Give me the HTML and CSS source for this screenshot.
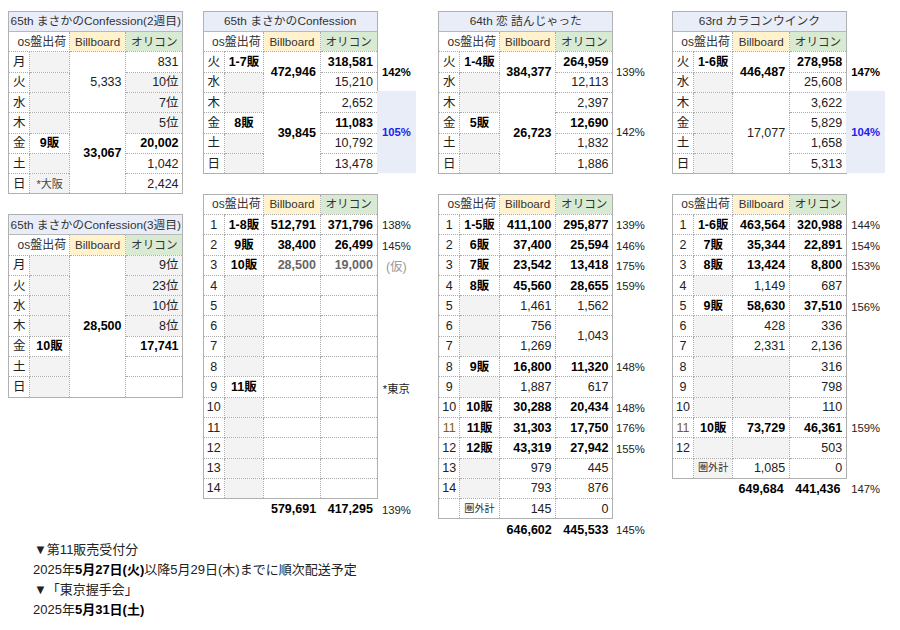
FILE: index.html
```html
<!DOCTYPE html>
<html>
<head>
    <title>Sales sheets</title>
    <link rel="stylesheet" href="styles.css">
</head>
<body>
    <div class="boards">
        <div class="column">
            <div class="sheet sheet-plain">
                <table>
                    <colgroup><col class="c-day"><col class="c-lot"><col class="c-bb"><col class="c-or"></colgroup>
                    <tr class="title"><td colspan="4">65th まさかのConfession(2週目)</td></tr>
                    <tr class="head"><td colspan="2" class="os">os盤出荷</td><td class="bb">Billboard</td><td class="or">オリコン</td></tr>
                    <tr><td class="d">月</td><td class="g"></td><td class="n" rowspan="3">5,333</td><td class="n">831</td></tr>
                    <tr><td class="d">火</td><td class="g"></td><td class="n g">10位</td></tr>
                    <tr><td class="d">水</td><td class="g"></td><td class="n g">7位</td></tr>
                    <tr><td class="d">木</td><td class="g"></td><td class="n b" rowspan="4">33,067</td><td class="n g">5位</td></tr>
                    <tr><td class="d">金</td><td class="l b">9販</td><td class="n b">20,002</td></tr>
                    <tr><td class="d">土</td><td class="g"></td><td class="n">1,042</td></tr>
                    <tr><td class="d">日</td><td class="g small">*大阪</td><td class="n">2,424</td></tr>
                </table>
            </div>
            <div class="sheet sheet-plain">
                <table>
                    <colgroup><col class="c-day"><col class="c-lot"><col class="c-bb"><col class="c-or"></colgroup>
                    <tr class="title"><td colspan="4">65th まさかのConfession(3週目)</td></tr>
                    <tr class="head"><td colspan="2" class="os">os盤出荷</td><td class="bb">Billboard</td><td class="or">オリコン</td></tr>
                    <tr><td class="d">月</td><td class="g"></td><td class="n b" rowspan="7">28,500</td><td class="n g">9位</td></tr>
                    <tr><td class="d">火</td><td class="g"></td><td class="n g">23位</td></tr>
                    <tr><td class="d">水</td><td class="g"></td><td class="n g">10位</td></tr>
                    <tr><td class="d">木</td><td class="g"></td><td class="n g">8位</td></tr>
                    <tr><td class="d">金</td><td class="l b">10販</td><td class="n b">17,741</td></tr>
                    <tr><td class="d">土</td><td class="g"></td><td class="n"></td></tr>
                    <tr><td class="d">日</td><td class="g"></td><td class="n"></td></tr>
                </table>
            </div>
        </div>

        <div class="column">
            <div class="sheet">
                <table>
                    <colgroup><col class="c-day"><col class="c-lot"><col class="c-bb"><col class="c-or"></colgroup>
                    <tr class="title"><td colspan="4">65th まさかのConfession</td></tr>
                    <tr class="head"><td colspan="2" class="os">os盤出荷</td><td class="bb">Billboard</td><td class="or">オリコン</td></tr>
                    <tr><td class="d">火</td><td class="l b">1-7販</td><td class="n b" rowspan="2">472,946</td><td class="n b">318,581</td></tr>
                    <tr><td class="d">水</td><td class="g"></td><td class="n">15,210</td></tr>
                    <tr><td class="d">木</td><td class="g"></td><td class="n b" rowspan="4">39,845</td><td class="n">2,652</td></tr>
                    <tr><td class="d">金</td><td class="l b">8販</td><td class="n b">11,083</td></tr>
                    <tr><td class="d">土</td><td class="g"></td><td class="n">10,792</td></tr>
                    <tr><td class="d">日</td><td class="g"></td><td class="n">13,478</td></tr>
                </table>
                <div class="side side-top">
                    <div class="pct two b">142%</div>
                    <div class="pct four blue">105%</div>
                </div>
            </div>
            <div class="sheet">
                <table>
                    <colgroup><col class="c-day"><col class="c-lot"><col class="c-bb"><col class="c-or"></colgroup>
                    <tr class="head"><td colspan="2" class="os">os盤出荷</td><td class="bb">Billboard</td><td class="or">オリコン</td></tr>
                    <tr><td class="d">1</td><td class="l b">1-8販</td><td class="n b">512,791</td><td class="n b">371,796</td></tr>
                    <tr><td class="d">2</td><td class="l b">9販</td><td class="n b">38,400</td><td class="n b">26,499</td></tr>
                    <tr><td class="d">3</td><td class="l b">10販</td><td class="n b tentative">28,500</td><td class="n b tentative">19,000</td></tr>
                    <tr><td class="d">4</td><td class="g"></td><td></td><td></td></tr>
                    <tr><td class="d">5</td><td class="g"></td><td></td><td></td></tr>
                    <tr><td class="d">6</td><td class="g"></td><td></td><td></td></tr>
                    <tr><td class="d">7</td><td class="g"></td><td></td><td></td></tr>
                    <tr><td class="d">8</td><td class="g"></td><td></td><td></td></tr>
                    <tr><td class="d">9</td><td class="l b">11販</td><td></td><td></td></tr>
                    <tr><td class="d">10</td><td class="g"></td><td></td><td></td></tr>
                    <tr><td class="d">11</td><td class="g"></td><td></td><td></td></tr>
                    <tr><td class="d">12</td><td class="g"></td><td></td><td></td></tr>
                    <tr><td class="d">13</td><td class="g"></td><td></td><td></td></tr>
                    <tr><td class="d">14</td><td class="g"></td><td></td><td></td></tr>
                </table>
                <div class="side side-sub">
                    <div class="pct">138%</div>
                    <div class="pct">145%</div>
                    <div class="pct tentative-note">(仮)</div>
                    <div></div><div></div><div></div><div></div><div></div>
                    <div class="pct">*東京</div>
                </div>
                <div class="totals"><span>579,691</span><span>417,295</span></div>
                <div class="pct">139%</div>
            </div>
        </div>

        <div class="column">
            <div class="sheet tight">
                <table>
                    <colgroup><col class="c-day"><col class="c-lot"><col class="c-bb"><col class="c-or"></colgroup>
                    <tr class="title"><td colspan="4">64th 恋 詰んじゃった</td></tr>
                    <tr class="head"><td colspan="2" class="os">os盤出荷</td><td class="bb">Billboard</td><td class="or">オリコン</td></tr>
                    <tr><td class="d">火</td><td class="l b">1-4販</td><td class="n b" rowspan="2">384,377</td><td class="n b">264,959</td></tr>
                    <tr><td class="d">水</td><td class="g"></td><td class="n">12,113</td></tr>
                    <tr><td class="d">木</td><td class="g"></td><td class="n b" rowspan="4">26,723</td><td class="n">2,397</td></tr>
                    <tr><td class="d">金</td><td class="l b">5販</td><td class="n b">12,690</td></tr>
                    <tr><td class="d">土</td><td class="g"></td><td class="n">1,832</td></tr>
                    <tr><td class="d">日</td><td class="g"></td><td class="n">1,886</td></tr>
                </table>
                <div class="side side-top">
                    <div class="pct two">139%</div>
                    <div class="pct four">142%</div>
                </div>
            </div>
            <div class="sheet tight">
                <table>
                    <colgroup><col class="c-day"><col class="c-lot"><col class="c-bb"><col class="c-or"></colgroup>
                    <tr class="head"><td colspan="2" class="os">os盤出荷</td><td class="bb">Billboard</td><td class="or">オリコン</td></tr>
                    <tr><td class="d">1</td><td class="l b">1-5販</td><td class="n b">411,100</td><td class="n b">295,877</td></tr>
                    <tr><td class="d">2</td><td class="l b">6販</td><td class="n b">37,400</td><td class="n b">25,594</td></tr>
                    <tr><td class="d">3</td><td class="l b">7販</td><td class="n b">23,542</td><td class="n b">13,418</td></tr>
                    <tr><td class="d">4</td><td class="l b">8販</td><td class="n b">45,560</td><td class="n b">28,655</td></tr>
                    <tr><td class="d">5</td><td class="g"></td><td class="n">1,461</td><td class="n">1,562</td></tr>
                    <tr><td class="d">6</td><td class="g"></td><td class="n">756</td><td class="n" rowspan="2">1,043</td></tr>
                    <tr><td class="d">7</td><td class="g"></td><td class="n">1,269</td></tr>
                    <tr><td class="d">8</td><td class="l b">9販</td><td class="n b">16,800</td><td class="n b">11,320</td></tr>
                    <tr><td class="d">9</td><td class="g"></td><td class="n">1,887</td><td class="n">617</td></tr>
                    <tr><td class="d">10</td><td class="l b">10販</td><td class="n b">30,288</td><td class="n b">20,434</td></tr>
                    <tr><td class="d olive">11</td><td class="l b">11販</td><td class="n b">31,303</td><td class="n b">17,750</td></tr>
                    <tr><td class="d">12</td><td class="l b">12販</td><td class="n b">43,319</td><td class="n b">27,942</td></tr>
                    <tr><td class="d">13</td><td class="g"></td><td class="n">979</td><td class="n">445</td></tr>
                    <tr><td class="d">14</td><td class="g"></td><td class="n">793</td><td class="n">876</td></tr>
                    <tr><td class="d"></td><td class="out">圏外計</td><td class="n">145</td><td class="n">0</td></tr>
                </table>
                <div class="side side-sub">
                    <div class="pct">139%</div>
                    <div class="pct">146%</div>
                    <div class="pct">175%</div>
                    <div class="pct">159%</div>
                    <div></div><div></div><div></div>
                    <div class="pct">148%</div>
                    <div></div>
                    <div class="pct">148%</div>
                    <div class="pct">176%</div>
                    <div class="pct">155%</div>
                </div>
                <div class="totals"><span>646,602</span><span>445,533</span></div>
                <div class="pct">145%</div>
            </div>
        </div>

        <div class="column">
            <div class="sheet">
                <table>
                    <colgroup><col class="c-day"><col class="c-lot"><col class="c-bb"><col class="c-or"></colgroup>
                    <tr class="title"><td colspan="4">63rd カラコンウインク</td></tr>
                    <tr class="head"><td colspan="2" class="os">os盤出荷</td><td class="bb">Billboard</td><td class="or">オリコン</td></tr>
                    <tr><td class="d">火</td><td class="l b">1-6販</td><td class="n b" rowspan="2">446,487</td><td class="n b">278,958</td></tr>
                    <tr><td class="d">水</td><td class="g"></td><td class="n">25,608</td></tr>
                    <tr><td class="d">木</td><td class="g"></td><td class="n" rowspan="4">17,077</td><td class="n">3,622</td></tr>
                    <tr><td class="d">金</td><td class="g"></td><td class="n">5,829</td></tr>
                    <tr><td class="d">土</td><td class="g"></td><td class="n">1,658</td></tr>
                    <tr><td class="d">日</td><td class="g"></td><td class="n">5,313</td></tr>
                </table>
                <div class="side side-top">
                    <div class="pct two b">147%</div>
                    <div class="pct four blue">104%</div>
                </div>
            </div>
            <div class="sheet">
                <table>
                    <colgroup><col class="c-day"><col class="c-lot"><col class="c-bb"><col class="c-or"></colgroup>
                    <tr class="head"><td colspan="2" class="os">os盤出荷</td><td class="bb">Billboard</td><td class="or">オリコン</td></tr>
                    <tr><td class="d">1</td><td class="l b">1-6販</td><td class="n b">463,564</td><td class="n b">320,988</td></tr>
                    <tr><td class="d">2</td><td class="l b">7販</td><td class="n b">35,344</td><td class="n b">22,891</td></tr>
                    <tr><td class="d">3</td><td class="l b">8販</td><td class="n b">13,424</td><td class="n b">8,800</td></tr>
                    <tr><td class="d">4</td><td class="g"></td><td class="n">1,149</td><td class="n">687</td></tr>
                    <tr><td class="d">5</td><td class="l b">9販</td><td class="n b">58,630</td><td class="n b">37,510</td></tr>
                    <tr><td class="d">6</td><td class="g"></td><td class="n">428</td><td class="n">336</td></tr>
                    <tr><td class="d">7</td><td class="g"></td><td class="n">2,331</td><td class="n">2,136</td></tr>
                    <tr><td class="d">8</td><td class="g"></td><td class="g"></td><td class="n">316</td></tr>
                    <tr><td class="d">9</td><td class="g"></td><td class="g"></td><td class="n">798</td></tr>
                    <tr><td class="d">10</td><td class="g"></td><td class="g"></td><td class="n">110</td></tr>
                    <tr><td class="d olive">11</td><td class="l b">10販</td><td class="n b">73,729</td><td class="n b">46,361</td></tr>
                    <tr><td class="d">12</td><td class="g"></td><td class="g"></td><td class="n">503</td></tr>
                    <tr><td class="d"></td><td class="g out">圏外計</td><td class="n">1,085</td><td class="n">0</td></tr>
                </table>
                <div class="side side-sub">
                    <div class="pct">144%</div>
                    <div class="pct">154%</div>
                    <div class="pct">153%</div>
                    <div></div>
                    <div class="pct">156%</div>
                    <div></div><div></div><div></div><div></div><div></div>
                    <div class="pct">159%</div>
                </div>
                <div class="totals totals-shift"><span>649,684</span><span>441,436</span></div>
                <div class="pct">147%</div>
            </div>
        </div>
    </div>

    <div class="notes">
        <div class="mark">▼第11販売受付分</div>
        <div>2025年<b>5月27日(火)</b>以降5月29日(木)までに順次配送予定</div>
        <div class="mark">▼「東京握手会」</div>
        <div>2025年<b>5月31日(土)</b></div>
    </div>
</body>
</html>
```

FILE: styles.css
```css
body {
    margin: 0;
    background: white;
    color: #222;
    font-family: "Liberation Sans", "Noto Sans CJK JP", Arial, sans-serif;
    font-size: 12.5px;
}
.boards {
    display: grid;
    grid-template-columns: 194.4px 235.6px 233.7px 214px;
    padding: 10.8px 0 0 8.3px;
    align-items: start;
}
.column {
    display: flex;
    flex-direction: column;
    gap: 19.5px;
}
.sheet {
    display: grid;
    grid-template-columns: 174px 39.3px;
    align-items: start;
}
.sheet-plain { grid-template-columns: 174px; }

table {
    width: 174px;
    table-layout: fixed;
    border-collapse: collapse;
    border: 1.3px solid #b0b0b0;
}
.c-day { width: 21px; }
.c-lot { width: 39.5px; }
.c-bb { width: 56.5px; }
.c-or { width: 57px; }
tr { height: 20.3px; }
td {
    border: 1px dotted #aaa;
    padding: 0 3.8px 0 3px;
    white-space: nowrap;
    overflow: hidden;
    line-height: 14px;
}
.title td {
    height: 18.5px;
    background: #e8edf8;
    border-bottom: 1px solid #b8b8b8;
    text-align: center;
    font-size: 11.8px;
    padding: 0;
    color: #333;
}
.head td { font-size: 11.6px; text-align: center; color: #333; padding: 0; }
.head .os { text-align: right; padding-right: 2.5px; font-size: 12px; }
.bb { background: #fff2cc; }
.or { background: #d9ead3; }
.d { text-align: center; padding: 0; }
.l { text-align: center; padding: 0; }
.g { background: #f3f3f3; }
.n { text-align: right; }
.b { font-weight: bold; color: #000; }
.small { text-align: center; font-size: 11px; padding: 0; color: #444; }
.out { text-align: center; font-size: 10.2px; padding: 0; color: #333; }
.olive { color: #7f6000; }
.tentative { color: #666; }

.side {
    display: grid;
    grid-auto-rows: 20.3px;
}
.side-top { padding-top: 40px; }
.side-sub { padding-top: 21px; }
.pct {
    display: flex;
    align-items: center;
    justify-content: center;
    height: 20.3px;
    font-size: 11.3px;
    padding-top: 1px;
    box-sizing: border-box;
}
.two { grid-row: span 2; height: auto; align-self: stretch; }
.four { grid-row: span 4; height: auto; align-self: stretch; }
.blue { background: #e8edf8; color: #2222ee; font-weight: bold; }
.tentative-note { color: #999; font-size: 12.5px; }
.tight .pct { padding-right: 3px; }

.totals {
    display: flex;
    justify-content: flex-end;
    height: 20.3px;
    align-items: center;
    font-weight: bold;
    color: #000;
}
.totals span { width: 56.75px; padding-right: 3.8px; text-align: right; box-sizing: border-box; }
.totals-shift span { padding-right: 5.5px; }

.notes {
    padding: 0 0 0 33px;
    line-height: 20.2px;
    font-size: 13px;
    color: #222;
}
.notes b { color: #000; }
.mark { padding-left: 1px; }
```
